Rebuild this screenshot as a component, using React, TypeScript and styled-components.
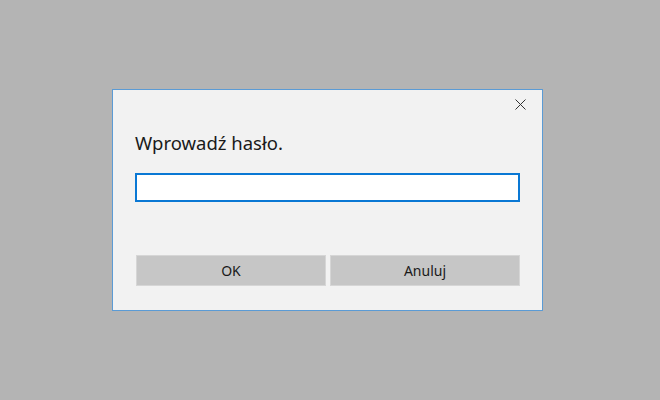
import React from "react";
import styled, { createGlobalStyle } from "styled-components";

const Global = createGlobalStyle`
  html, body { margin: 0; padding: 0; }
  body { background: #b4b4b4; font-family: "Noto Sans", "Open Sans", sans-serif; }
`;

const Screen = styled.div`
  width: 660px;
  height: 400px;
  display: flex;
  align-items: center;
  justify-content: center;
  padding-right: 5px;
  box-sizing: border-box;
`;

const Dialog = styled.div`
  width: 431px;
  height: 222px;
  box-sizing: border-box;
  background: #f2f2f2;
  border: 1px solid #5b9bd5;
  display: flex;
  flex-direction: column;
  padding: 0 22px;
`;

const TitleBar = styled.div`
  height: 28px;
  display: flex;
  justify-content: flex-end;
  align-items: center;
  margin-right: -22px;
`;

const CloseButton = styled.button`
  width: 44px;
  height: 28px;
  border: none;
  background: transparent;
  padding: 0;
  display: flex;
  align-items: center;
  justify-content: center;
  cursor: pointer;
`;

const Prompt = styled.div`
  margin-top: 13px;
  font-size: 18.5px;
  line-height: 24px;
  color: #1a1a1a;
`;

const PasswordInput = styled.input`
  margin-top: 18px;
  width: 100%;
  height: 29px;
  box-sizing: border-box;
  border: 2px solid #0a78d4;
  background: #ffffff;
  outline: none;
  padding: 0 6px;
  font-size: 14px;
`;

const Actions = styled.div`
  margin-top: 53px;
  display: grid;
  grid-template-columns: 1fr 1fr;
  gap: 4px;
  padding-left: 1px;
`;

const ActionButton = styled.button`
  height: 31px;
  box-sizing: border-box;
  border: 1px solid #d6d6d6;
  background: #c6c6c6;
  font-family: "Noto Sans", "Open Sans", sans-serif;
  font-size: 14px;
  color: #1a1a1a;
  padding: 0;
  cursor: pointer;
`;

export default function App() {
  return (
    <>
      <Global />
      <Screen>
        <Dialog>
          <TitleBar>
            <CloseButton aria-label="Zamknij">
              <svg width="11" height="11" viewBox="0 0 11 11">
                <path d="M0.5 0.5 L10.5 10.5 M10.5 0.5 L0.5 10.5" stroke="#333" strokeWidth="1" fill="none" />
              </svg>
            </CloseButton>
          </TitleBar>
          <Prompt>Wprowadź hasło.</Prompt>
          <PasswordInput type="password" />
          <Actions>
            <ActionButton>OK</ActionButton>
            <ActionButton>Anuluj</ActionButton>
          </Actions>
        </Dialog>
      </Screen>
    </>
  );
}
